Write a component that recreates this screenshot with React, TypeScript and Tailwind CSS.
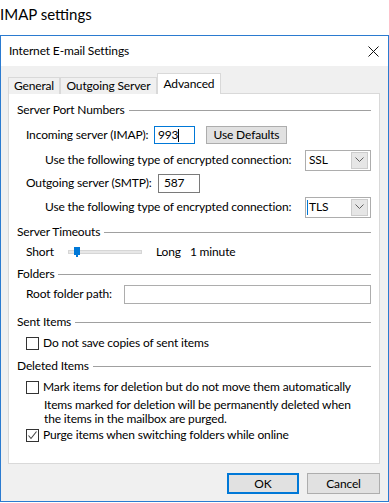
import React from 'react'

const font = { fontFamily: '"Segoe UI", Lato, "Noto Sans", sans-serif' }

const GroupTitle: React.FC<{ title: string; className?: string }> = ({ title, className }) => (
  <div className={`flex items-center h-[20px] pl-[8px] pr-[8px] ${className ?? ''}`}>
    <span className="whitespace-nowrap">{title}</span>
    <div className="flex-1 h-px bg-[#a0a0a0] ml-[4px]" />
  </div>
)

const Checkbox: React.FC<{ checked?: boolean }> = ({ checked }) => (
  <div className="w-[13px] h-[13px] border border-[#333333] bg-white flex items-center justify-center shrink-0">
    {checked && (
      <svg width="11" height="11" viewBox="0 0 11 11">
        <path d="M1.5 5.5 L4 8.5 L9.5 1.5" fill="none" stroke="#444" strokeWidth="1.1" />
      </svg>
    )}
  </div>
)

const Select: React.FC<{ value: string; focused?: boolean }> = ({ value, focused }) => (
  <div className="w-[66px] h-[21px] border border-[#adadad] bg-white flex items-center pl-[1px] pr-[2px]">
    {focused ? <div className="w-px h-[15px] bg-[#0078d7]" /> : <div className="w-px" />}
    <span className="flex-1 pl-[1px]">{value}</span>
    <div className="w-[17px] h-[17px] bg-[#e6e6e6] border border-[#cccccc] flex items-center justify-center">
      <svg width="9" height="6" viewBox="0 0 9 6">
        <path d="M0.5 0.5 L4.5 4.5 L8.5 0.5" fill="none" stroke="#606060" strokeWidth="1" />
      </svg>
    </div>
  </div>
)

const Tab: React.FC<{ label: string; width: string; active?: boolean }> = ({ label, width, active }) =>
  active ? (
    <div className={`${width} h-[21px] -mb-px bg-white border border-b-0 border-[#d9d9d9] flex items-center justify-center relative z-10`}>
      {label}
    </div>
  ) : (
    <div className={`${width} h-[17px] mt-[4px] bg-[#f0f0f0] border border-b-0 border-[#d9d9d9] flex items-center justify-center`}>
      {label}
    </div>
  )

export default function App() {
  return (
    <div className="w-[389px] h-[503px] bg-white text-black text-[12px] tracking-[-0.15px] overflow-hidden" style={font}>
      <div className="h-[35px] pt-[3px] text-[15px] leading-[22px] tracking-normal">IMAP settings</div>

      <div className="w-[389px] h-[467px] border border-[#2b7bd0] flex flex-col">
        <div className="h-[30px] bg-white flex items-center justify-between pl-[8px] pr-[9px] shrink-0">
          <span>Internet E-mail Settings</span>
          <svg width="11" height="11" viewBox="0 0 11 11">
            <path d="M0.5 0.5 L10.5 10.5 M10.5 0.5 L0.5 10.5" stroke="#111" strokeWidth="1" />
          </svg>
        </div>

        <div className="flex-1 bg-[#f0f0f0] pl-[7px] pr-[8px] pt-[7px]">
          <div className="flex h-[20px]">
            <Tab label="General" width="w-[52px]" />
            <Tab label="Outgoing Server" width="w-[97px]" />
            <Tab label="Advanced" width="w-[64px]" active />
          </div>

          <div className="h-[371px] bg-white border border-[#d9d9d9] pt-[6px] flex flex-col">
            <GroupTitle title="Server Port Numbers" />

            <div className="flex items-center h-[20px] mt-[5px] pl-[17px]">
              <span className="w-[128px] whitespace-nowrap">Incoming server (IMAP):</span>
              <div className="w-[41px] h-[18px] border border-[#0078d7] flex items-center pl-[3px]">
                <span>993</span>
                <div className="w-px h-[13px] bg-black" />
              </div>
              <div className="ml-[11px] w-[81px] h-[18px] bg-[#e1e1e1] border border-[#adadad] flex items-center justify-center">
                Use Defaults
              </div>
            </div>

            <div className="flex items-center h-[20px] mt-[5px] pl-[36px]">
              <span className="w-[260px] whitespace-nowrap">Use the following type of encrypted connection:</span>
              <Select value="SSL" />
            </div>

            <div className="flex items-center h-[20px] mt-[3px] pl-[17px]">
              <span className="w-[132px] whitespace-nowrap">Outgoing server (SMTP):</span>
              <div className="w-[42px] h-[19px] border border-[#7a7a7a] flex items-center pl-[5px]">587</div>
            </div>

            <div className="flex items-center h-[20px] mt-[4px] pl-[36px]">
              <span className="w-[260px] whitespace-nowrap">Use the following type of encrypted connection:</span>
              <Select value="TLS" focused />
            </div>

            <GroupTitle title="Server Timeouts" className="mt-[5px]" />

            <div className="flex items-center h-[20px] pl-[17px]">
              <span className="w-[42px]">Short</span>
              <div className="relative w-[74px] h-[4px] bg-[#e7e7e7] border border-[#d6d6d6]">
                <div className="absolute left-[5px] -top-[4px] w-[6px] h-[8px] bg-[#0078d7]" />
                <div className="absolute left-[7px] top-[4px] w-[2px] h-[2px] bg-[#0078d7]" />
              </div>
              <span className="ml-[14px]">Long</span>
              <span className="ml-[9px]">1 minute</span>
            </div>

            <GroupTitle title="Folders" className="mt-[2px]" />

            <div className="flex items-center h-[20px] pl-[17px]">
              <span className="w-[98px] whitespace-nowrap">Root folder path:</span>
              <div className="w-[247px] h-[19px] border border-[#adadad]" />
            </div>

            <GroupTitle title="Sent Items" className="mt-[8px]" />

            <div className="flex items-center h-[20px] mt-[1px] pl-[17px] gap-[4px]">
              <Checkbox />
              <span>Do not save copies of sent items</span>
            </div>

            <GroupTitle title="Deleted Items" className="mt-[3px]" />

            <div className="flex items-center h-[20px] mt-[1px] pl-[17px] gap-[4px]">
              <Checkbox />
              <span className="whitespace-nowrap">Mark items for deletion but do not move them automatically</span>
            </div>

            <div className="mt-[1px] pl-[35px] pr-[8px] leading-[14px]">
              Items marked for deletion will be permanently deleted when
              <br />
              the items in the mailbox are purged.
            </div>

            <div className="flex items-center h-[18px] pl-[17px] gap-[4px]">
              <Checkbox checked />
              <span>Purge items when switching folders while online</span>
            </div>
          </div>

          <div className="flex justify-end gap-[8px] mt-[9px]">
            <div className="w-[72px] h-[21px] bg-[#e1e1e1] border-2 border-[#0078d7] flex items-center justify-center">OK</div>
            <div className="w-[73px] h-[21px] bg-[#e1e1e1] border border-[#adadad] flex items-center justify-center">Cancel</div>
          </div>
        </div>
      </div>
    </div>
  )
}
